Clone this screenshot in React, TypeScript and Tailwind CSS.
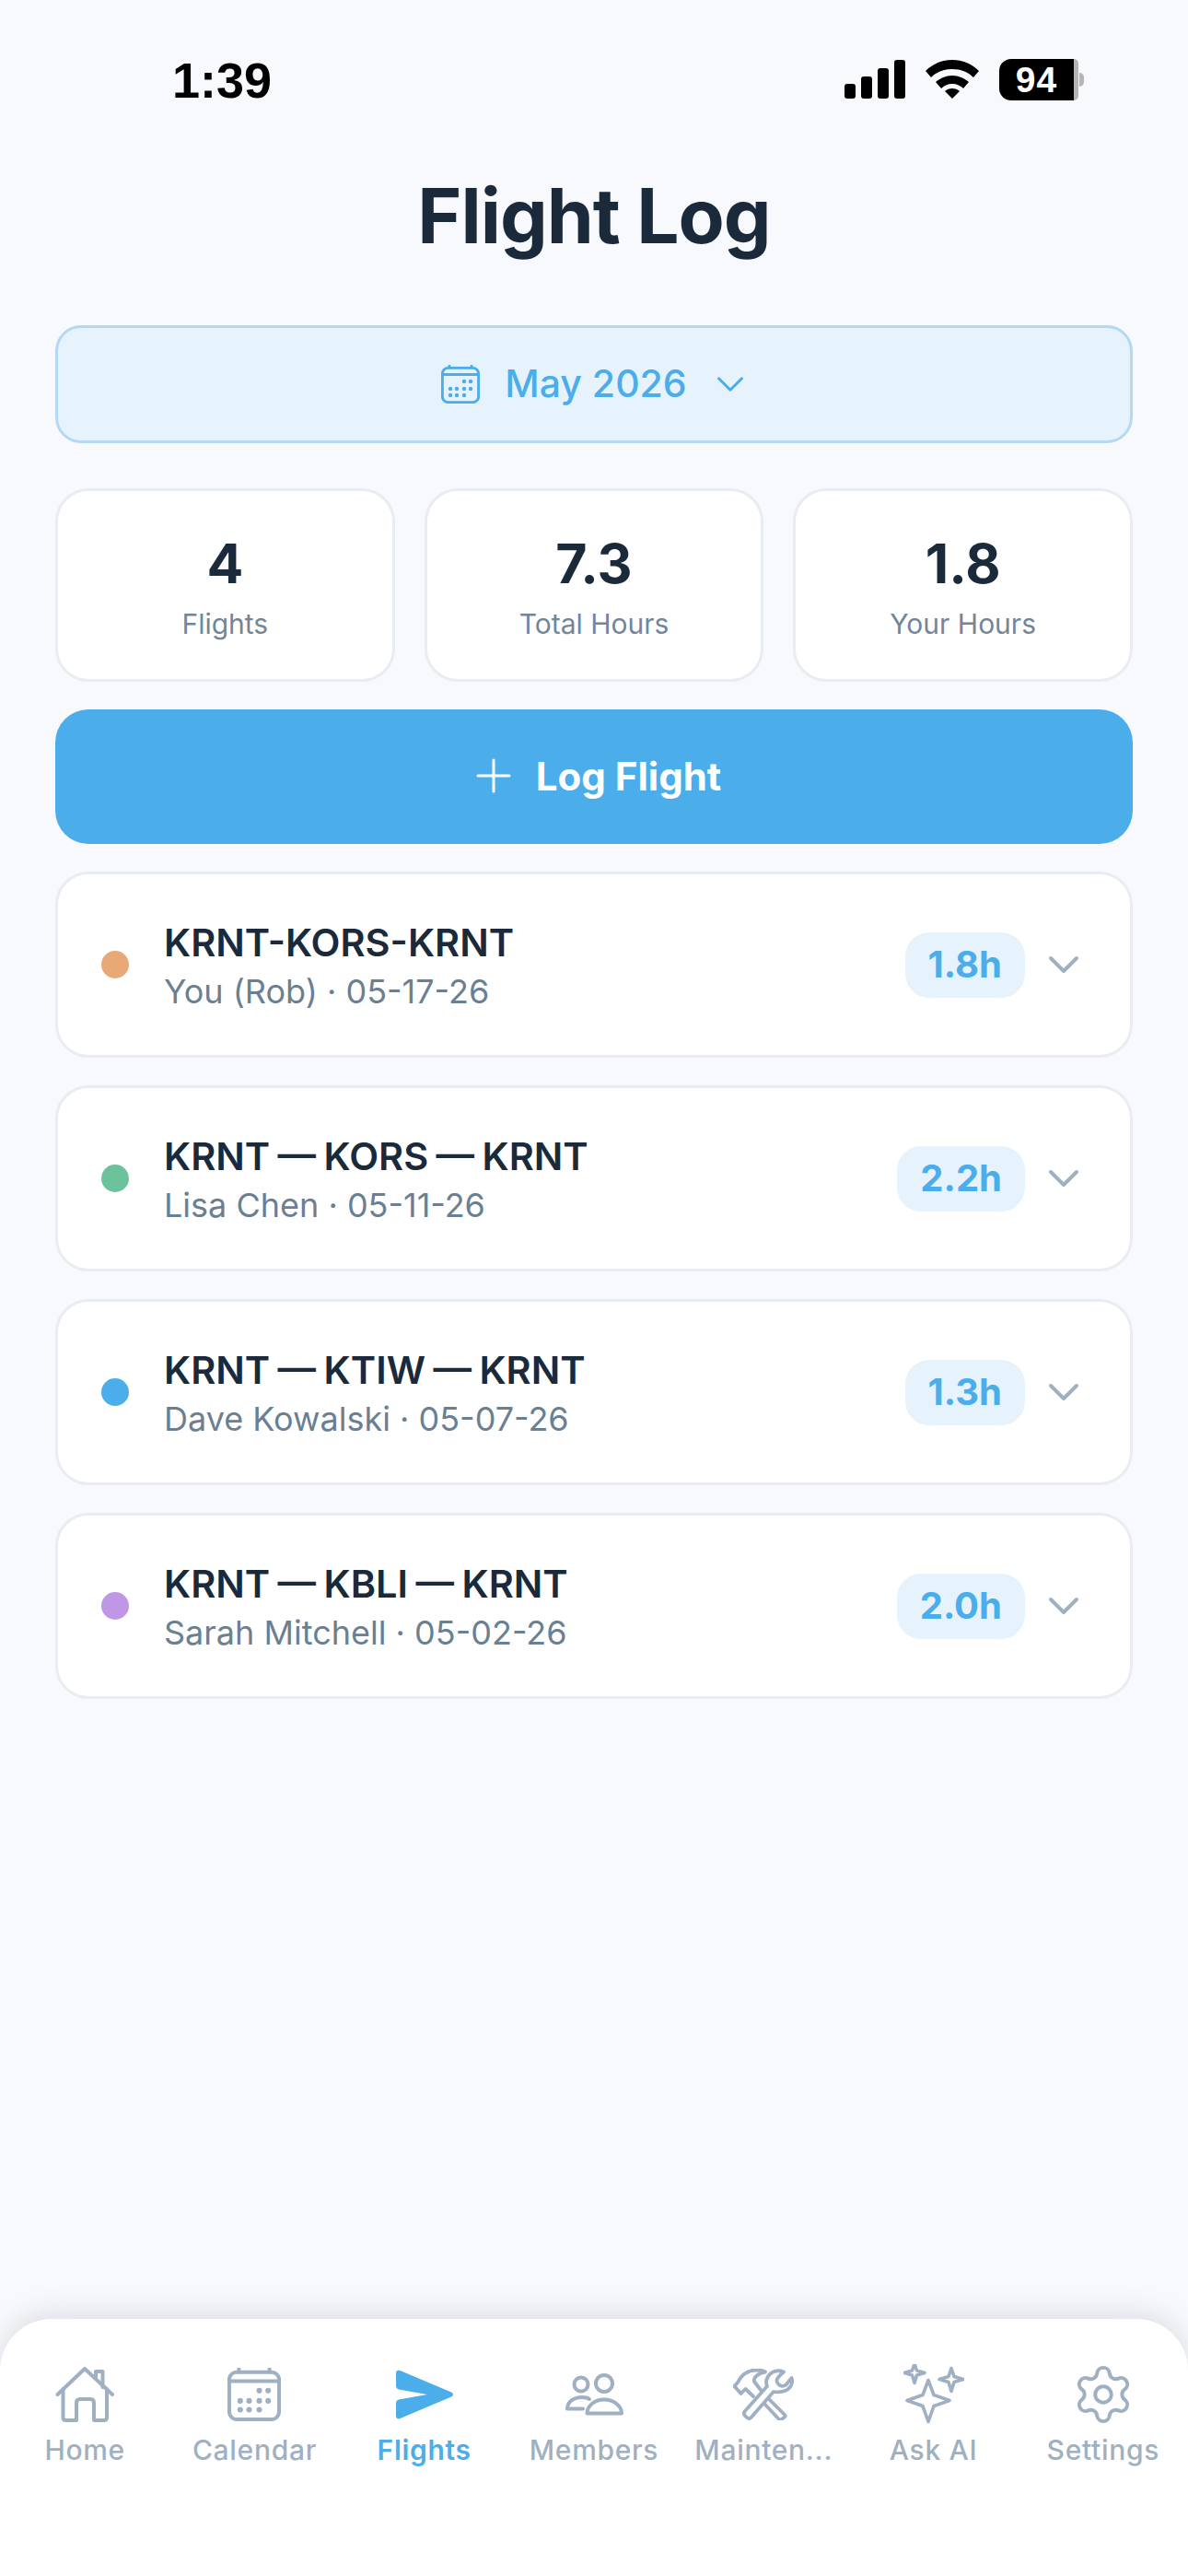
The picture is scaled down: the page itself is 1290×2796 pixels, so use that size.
import { ChevronDown, Plus, Settings } from 'lucide-react';

const inter = { fontFamily: 'Inter, sans-serif' };
const system = { fontFamily: '"Liberation Sans", sans-serif' };

const stats = [
  { value: '4', label: 'Flights' },
  { value: '7.3', label: 'Total Hours' },
  { value: '1.8', label: 'Your Hours' },
];

const flights = [
  { route: 'KRNT-KORS-KRNT', meta: 'You (Rob) · 05-17-26', hours: '1.8h', dot: 'bg-[#e8a977]' },
  { route: 'KRNT — KORS — KRNT', meta: 'Lisa Chen · 05-11-26', hours: '2.2h', dot: 'bg-[#6cc29b]' },
  { route: 'KRNT — KTIW — KRNT', meta: 'Dave Kowalski · 05-07-26', hours: '1.3h', dot: 'bg-[#4badea]' },
  { route: 'KRNT — KBLI — KRNT', meta: 'Sarah Mitchell · 05-02-26', hours: '2.0h', dot: 'bg-[#c097e6]' },
];

function CalendarIcon({ className }: { className: string }) {
  const dots = [
    [25, 18], [32, 18],
    [10, 26], [17, 26], [25, 26], [32, 26],
    [10, 33], [17, 33], [25, 33],
  ];
  return (
    <svg viewBox="0 0 42 42" className={className} fill="none" stroke="currentColor" strokeWidth="2.9" strokeLinecap="round">
      <rect x="1.400" y="3.400" width="39.200" height="37.200" rx="6" />
      <path d="M1.400 10.500h39.200M9 1.200v2M33 1.200v2" />
      {dots.map(([x, y]) => (
        <circle key={`${x}-${y}`} cx={x} cy={y} r="2.200" fill="currentColor" stroke="none" />
      ))}
    </svg>
  );
}

function HomeIcon() {
  return (
    <svg viewBox="0 0 64 60" className="w-[64px] h-[60px]" fill="none" stroke="currentColor" strokeWidth="4" strokeLinecap="round" strokeLinejoin="round">
      <path d="M2.500 30 32 2l30 28" />
      <path d="M8.500 24v31q0 3 3 3H23V39q0-4 4-4h11q4 0 4 4v19h11q3 0 3-3V24" />
      <path d="M44 11V5h7.500v17" />
    </svg>
  );
}

function PlaneIcon() {
  return (
    <svg viewBox="0 0 62 54" className="w-[62px] h-[54px]" fill="currentColor">
      <path d="M0 4C0 1 2 0 4.500 1L60 24.500c2.500 1.200 2.500 3.800 0 5L4.500 53C2 54 0 53 0 50V36.500c0-2 1-3.500 3-4L34 27 3 21.500c-2-.5-3-2-3-4Z" />
    </svg>
  );
}

function MembersIcon() {
  return (
    <svg viewBox="0 0 64 48" className="w-[64px] h-[48px]" fill="none" stroke="currentColor" strokeWidth="4" strokeLinecap="round" strokeLinejoin="round">
      <circle cx="18" cy="13" r="7.500" />
      <circle cx="43" cy="12" r="9" />
      <path d="M27 29c-2-1.500-5-2-8-2-9 0-16 5-16 12.500h17" />
      <path d="M24.500 44.500c0-8 8-15 18.500-15s19 7 19 15Z" />
    </svg>
  );
}

function ToolsIcon() {
  return (
    <svg viewBox="0 0 66 56" className="w-[66px] h-[56px]" fill="none" stroke="currentColor" strokeWidth="3.800" strokeLinecap="round" strokeLinejoin="round">
      {/* hammer head, then its handle behind the wrench */}
      <path d="M1.500 19 5 15C9 7 16 1.500 25 1.500c4 0 8 .5 10 2-7 1-13 5.500-12 10.500l7 9" />
      <path d="m1.500 19 7 8 5-5 8.500 8" />
      <path d="m39 33 17 17q1.500 1 0 2.500L52.500 55q-1.500 1-3-.5L34 38" />
      {/* wrench */}
      <path d="M37 19 12.500 46.500q-1.500 2 .5 4.500l2 2q2 2 4.500 0L44 25c6 1 15 0 18.500-6 2.500-4.500 2-7 1-9l-6 7.500c-3.500 2.500-7.500 1.500-9.500-2.500-1.500-3 0-5.500 7-11.500-5-2-10-1.500-14 1.500-5 4-6 10-4 14Z" />
    </svg>
  );
}

function SparkIcon() {
  return (
    <svg viewBox="0 1.500 66 66" className="w-[66px] h-[66px]" fill="none" stroke="currentColor" strokeWidth="3.600" strokeLinejoin="round">
      <path d="m27 19 6 16 17 6-17 6-6 17-6-17-17-6 17-6Z" />
      <path d="m52 6 3 9 10 3-10 3-3 10-3-10-10-3 10-3Z" />
      <path d="m12 1 2.500 7.500L23 11l-8.500 2.500L12 22l-2.500-8.500L1 11l8.500-2.500Z" />
    </svg>
  );
}

const tabs = [
  { label: 'Home', icon: <HomeIcon /> },
  { label: 'Calendar', icon: <CalendarIcon className="w-[58px] h-[58px]" /> },
  { label: 'Flights', icon: <PlaneIcon />, active: true },
  { label: 'Members', icon: <MembersIcon /> },
  { label: 'Mainten...', icon: <ToolsIcon /> },
  { label: 'Ask AI', icon: <SparkIcon /> },
  { label: 'Settings', icon: <Settings className="w-[70px] h-[70px]" strokeWidth={1.350} /> },
];

export default function App() {
  return (
    <div className="w-[1290px] h-[2796px] bg-[#f8f9fd] flex flex-col text-[#1b2a3b]" style={inter}>
      {/* status bar */}
      <div className="h-[150px] pt-[57px] pl-[187px] pr-[113px] flex justify-between items-start shrink-0">
        <span className="text-[54px] leading-[60px] font-bold text-black" style={system}>1:39</span>
        <div className="flex items-center gap-[22px] h-[46px] mt-[6px]">
          <svg viewBox="0 0 66 42" className="w-[66px] h-[42px]" fill="black">
            <rect x="0" y="26" width="12" height="16" rx="3" />
            <rect x="18" y="18" width="12" height="24" rx="3" />
            <rect x="36" y="9" width="12" height="33" rx="3" />
            <rect x="54" y="0" width="12" height="42" rx="3" />
          </svg>
          <svg viewBox="0 0 58 42" className="w-[58px] h-[42px]" fill="black">
            <path d="M29 0c11 0 21 4 29 12l-6 7c-6-6-14-9-23-9S12 13 6 19L0 12C8 4 18 0 29 0Z" />
            <path d="M29 17c7 0 13 3 18 7l-6 7c-3-3-7-5-12-5s-9 2-12 5l-6-7c5-4 11-7 18-7Z" />
            <path d="M29 31c3 0 6 1 8 3l-8 8-8-8c2-2 5-3 8-3Z" />
          </svg>
          <div className="flex items-center">
            <div className="w-[81px] h-[45px] bg-black rounded-l-[13px] text-white text-[39px] font-bold leading-[45px] text-center tracking-[1px]" style={system}>94</div>
            <div className="w-[5px] h-[45px] bg-[#b5b5b5] rounded-r-[8px]" />
            <div className="w-[5px] h-[15px] bg-[#b5b5b5] rounded-r-full ml-[1px]" />
          </div>
        </div>
      </div>

      <h1 className="text-[82px] leading-[100px] font-bold text-center tracking-[-1px] mt-[35px]">Flight Log</h1>

      <div className="px-[60px] flex flex-col mt-[68px]">
        <div className="h-[128px] pl-[7px] rounded-[28px] border-[3px] border-[#b3d9f3] bg-[#e6f3fd] flex items-center justify-center text-[#4badea]">
          <CalendarIcon className="w-[42px] h-[42px]" />
          <span className="text-[41px] font-medium ml-[27px]">May 2026</span>
          <ChevronDown className="w-[50px] h-[50px] ml-[22px]" strokeWidth={1.450} />
        </div>

        <div className="grid grid-cols-3 gap-[32px] mt-[49px]">
          {stats.map(s => (
            <div key={s.label} className="h-[210px] rounded-[36px] border-[3px] border-[#e9ecf2] bg-white flex flex-col items-center pt-[44px]">
              <div className="text-[59px] leading-[70px] font-bold">{s.value}</div>
              <div className="text-[30px] leading-[40px] mt-[10px] text-[#72869a]">{s.label}</div>
            </div>
          ))}
        </div>

        <div className="h-[146px] pb-[2px] rounded-[36px] bg-[#4badea] mt-[30px] flex items-center justify-center text-white">
          <Plus className="w-[58px] h-[58px]" strokeWidth={1.250} />
          <span className="text-[42px] font-bold ml-[17px]">Log Flight</span>
        </div>

        <div className="flex flex-col gap-[30px] mt-[30px]">
          {flights.map(f => (
            <div key={f.meta} className="h-[202px] rounded-[36px] border-[3px] border-[#e9ecf2] bg-white flex items-center pl-[47px] pr-[44px]">
              <div className={`w-[30px] h-[30px] rounded-full ${f.dot}`} />
              <div className="ml-[38px] flex-1 pt-[3px]">
                <div className="text-[41.500px] leading-[52px] font-semibold [word-spacing:-2px]">{f.route}</div>
                <div className="text-[36px] leading-[48px] mt-[3px] text-[#6b7f93]">{f.meta}</div>
              </div>
              <div className="h-[71px] px-[25px] rounded-[26px] bg-[#e6f3fd] text-[#4badea] text-[40px] font-bold flex items-center">{f.hours}</div>
              <ChevronDown className="w-[56px] h-[56px] ml-[14px] text-[#9fb0c3]" strokeWidth={1.700} />
            </div>
          ))}
        </div>
      </div>

      {/* bottom tab bar */}
      <div className="mt-auto h-[279px] rounded-t-[56px] bg-white shadow-[0_-8px_30px_rgba(0,0,0,0.1)] flex pt-[50px]">
        {tabs.map(t => (
          <div key={t.label} className={`flex-1 flex flex-col items-center ${t.active ? 'text-[#4badea]' : 'text-[#9fb0c3]'}`}>
            <div className="h-[64px] flex items-center justify-center">{t.icon}</div>
            <span className={`text-[30px] leading-[40px] mt-[8px] tracking-[0.7px] whitespace-nowrap ${t.active ? 'font-semibold' : 'font-medium'}`}>{t.label}</span>
          </div>
        ))}
      </div>
    </div>
  );
}
